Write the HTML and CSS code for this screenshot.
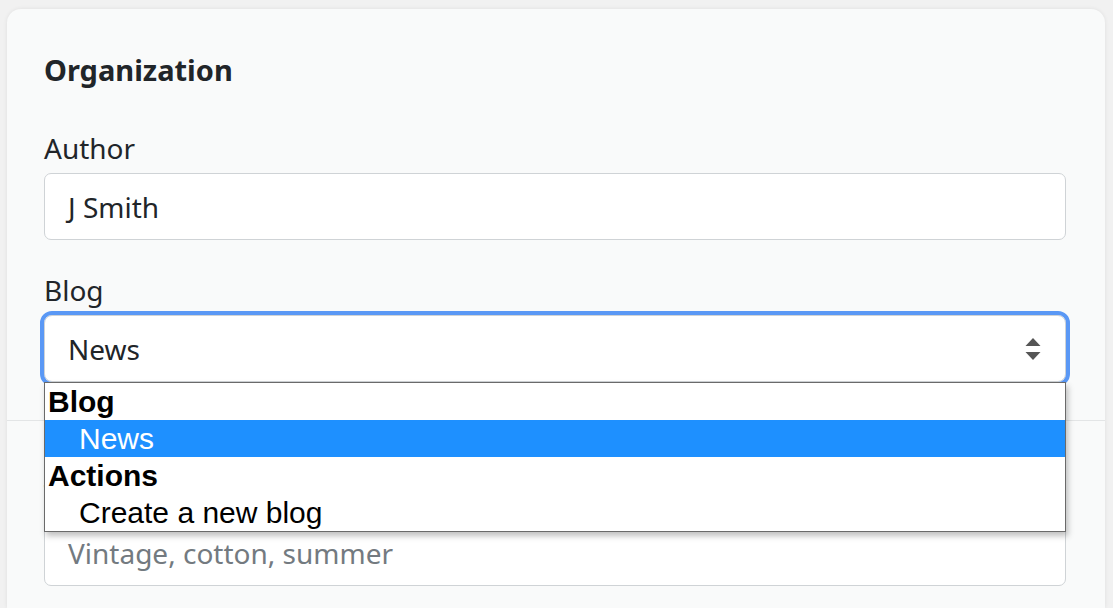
FILE: index.html
```html
<!DOCTYPE html>
<html lang="en">
<head>
<meta charset="utf-8">
<title>Organization</title>
<link rel="stylesheet" href="styles.css">
</head>
<body>
<div class="card">
  <section class="section">
    <h2 class="title">Organization</h2>
    <div class="field">
      <label class="label">Author</label>
      <div class="input">J Smith</div>
    </div>
    <div class="field">
      <label class="label">Blog</label>
      <div class="select-wrap">
        <div class="select">
          <span>News</span>
          <svg class="arrows" width="16" height="24" viewBox="0 0 16 24"><path d="M8 1 L15.5 9 L0.5 9 Z M0.5 15 L15.5 15 L8 23 Z" fill="#555"/></svg>
        </div>
        <div class="popup">
          <div class="group">Blog</div>
          <div class="option selected">News</div>
          <div class="group">Actions</div>
          <div class="option">Create a new blog</div>
        </div>
      </div>
    </div>
  </section>
  <section class="section lower">
    <div class="field">
      <label class="label">Tags</label>
      <div class="input placeholder">Vintage, cotton, summer</div>
    </div>
  </section>
</div>
</body>
</html>
```
FILE: styles.css
```css
html, body { margin: 0; padding: 0; }
body {
  background: #f1f1f1;
  font-family: "Noto Sans", "Open Sans", sans-serif;
  color: #212529;
  overflow: hidden;
}
.card {
  margin: 9px 8px 0 7px;
  background: #f9fafa;
  border-radius: 14px 14px 0 0;
  box-shadow: 0 0 4px rgba(0,0,0,0.08);
}
.section {
  padding: 44px 39px 38px 37px;
}
.lower {
  border-top: 1px solid #e3e5e6;
  padding-top: 56px;
  padding-bottom: 22px;
}
.title {
  margin: 0 0 44px 0;
  font-size: 29px;
  font-weight: 700;
  line-height: 34px;
}
.field + .field { margin-top: 33px; }
.label {
  display: block;
  font-size: 28px;
  line-height: 34px;
  margin-bottom: 8px;
}
.input, .select {
  box-sizing: border-box;
  height: 67px;
  border: 1px solid #cfd3d6;
  border-radius: 7px;
  background: #fff;
  font-size: 28px;
  padding: 0 23px;
  display: flex;
  align-items: center;
}
.placeholder { color: #737a80; }
.select-wrap { position: relative; }
.select {
  justify-content: space-between;
  padding-right: 24px;
  outline: 4px solid #5a98f5;
  outline-offset: 0;
  border-radius: 8px;
}
.arrows { display: block; }
.popup {
  position: absolute;
  left: 0;
  right: 0;
  top: 67px;
  z-index: 5;
  background: #fff;
  border: 1px solid #6a6a6a;
  box-shadow: 2px 4px 6px rgba(0,0,0,0.25);
  font-family: "Liberation Sans", Arial, sans-serif;
  font-size: 30px;
  color: #000;
}
.group, .option {
  height: 37px;
  line-height: 37px;
  padding-left: 3px;
}
.group { font-weight: 700; }
.option { padding-left: 34px; }
.selected { background: #1e90ff; color: #fff; }
```
